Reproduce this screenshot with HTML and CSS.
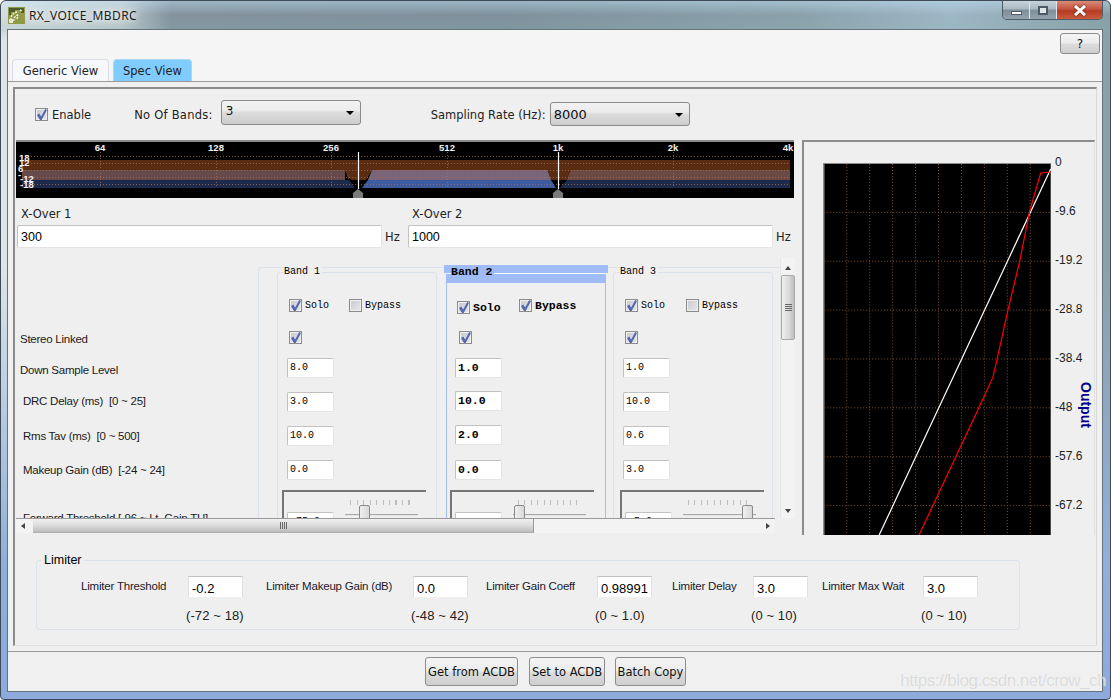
FILE: index.html
```html
<!DOCTYPE html>
<html lang="en">
<head>
    <meta charset="UTF-8">
    <title>RX_VOICE_MBDRC</title>
    <link rel="stylesheet" href="styles.css">
</head>
<body>
<div class="window">
    <div class="titlebar">
        <svg class="app-icon" width="17" height="17" viewBox="0 0 17 17">
            <rect width="17" height="17" fill="#8f9a45"/>
            <path d="M1 1h15v5h-3v-3h-6v2h-4v3h-2z" fill="#4c5a2c"/>
            <path d="M3 13a7 7 0 0 1 7-8M6 14a5 5 0 0 1 5-6M12 3l2 1M9 12a2 2 0 0 1 2-2" stroke="#f4f4e8" stroke-width="1.4" stroke-dasharray="2 1" fill="none"/>
            <rect x="1" y="12" width="4" height="4" fill="#e8e8d8"/>
        </svg>
        <span class="app-title">RX_VOICE_MBDRC</span>
        <div class="window-btns">
            <div class="win-btn win-min"><span></span></div>
            <div class="win-btn win-max"><span></span></div>
            <div class="win-btn win-close">
                <svg width="14" height="11" viewBox="0 0 14 11"><path d="M2 1l10 9M12 1l-10 9" stroke="#fff" stroke-width="3"/></svg>
            </div>
        </div>
    </div>

    <div class="client">
        <div class="client-head">
            <div class="help-row"><button class="btn help-btn">?</button></div>
            <div class="tabs">
                <div class="tab">Generic View</div>
                <div class="tab tab-active">Spec View</div>
            </div>
        </div>

        <div class="tab-pane">
            <div class="panel">
                <div class="options-row">
                    <input type="checkbox" class="check" checked>
                    <label class="opt-enable">Enable</label>
                    <label class="opt-bands">No Of Bands:</label>
                    <div class="combo combo-bands">3</div>
                    <label class="opt-rate">Sampling Rate (Hz):</label>
                    <div class="combo combo-rate">8000</div>
                </div>

                <div class="editor-row">
                    <div class="editor-left">
                        <svg class="spectrum" width="778" height="58" viewBox="16 140 778 58">
                            <rect x="16" y="140" width="778" height="58" fill="#000"/>
                            <rect x="16" y="140" width="778" height="2" fill="#8c8c8c"/>
                            <!-- level bands -->
                            <rect x="22" y="160" width="768" height="10" fill="#5a2c12"/>
                            <rect x="22" y="170" width="323" height="10" fill="#66494a"/>
                            <path d="M22 180h327l6 8h-333z" fill="#1d2a4c"/>
                            <path d="M345 170h4v10h0z" fill="#66494a"/>
                            <path d="M345 170h27l-6 10h-15z" fill="#5a2c12"/>
                            <path d="M545 170h27l-5 10h-16z" fill="#5a2c12"/>
                            <path d="M372 170h175l4 10h-183z" fill="#7a6479"/>
                            <path d="M368 180h183l5 8h-194z" fill="#3d5c9f"/>
                            <path d="M571 170h219v10h-223z" fill="#6b4a44"/>
                            <path d="M567 180h223v8h-230z" fill="#1d2a4c"/>
                            <!-- grid -->
                            <g class="spec-grid">
                                <path d="M22 156.500h768M22 163.500h768M22 170.500h768M22 177.500h768M22 184.500h768"/>
                                <path d="M100.500 152v36M216.500 152v36M331.500 152v36M447.500 152v36M673.500 152v36"/>
                            </g>
                            <g class="spec-text">
                                <text x="100" y="151" text-anchor="middle">64</text>
                                <text x="216" y="151" text-anchor="middle">128</text>
                                <text x="331" y="151" text-anchor="middle">256</text>
                                <text x="447" y="151" text-anchor="middle">512</text>
                                <text x="558" y="151" text-anchor="middle">1k</text>
                                <text x="673" y="151" text-anchor="middle">2k</text>
                                <text x="788" y="151" text-anchor="middle">4k</text>
                                <text x="19" y="161">18</text>
                                <text x="19" y="166">12</text>
                                <text x="18" y="172">6</text>
                                <text x="18" y="178">-</text>
                                <text x="20" y="182">-12</text>
                                <text x="20" y="188">-18</text>
                            </g>
                            <path d="M358.500 152v37M558.500 152v37" stroke="#fff" stroke-width="1.200"/>
                            <path d="M358 189l5 4v5h-10v-5zM558 189l5 4v5h-10v-5z" fill="#7a7a7a"/>
                        </svg>

                        <div class="xover-row">
                            <div class="xover">
                                <div class="xover-label">X-Over 1</div>
                                <div class="xover-field"><input class="field xover-input" value="300"><span>Hz</span></div>
                            </div>
                            <div class="xover">
                                <div class="xover-label">X-Over 2</div>
                                <div class="xover-field"><input class="field xover-input" value="1000"><span>Hz</span></div>
                            </div>
                        </div>

                        <div class="scroll-view">
                            <div class="scroll-content">
                                <div class="row-labels">
                                    <div>Stereo Linked</div>
                                    <div>Down Sample Level</div>
                                    <div class="indent">DRC Delay (ms)&nbsp; [0 ~ 25]</div>
                                    <div class="indent">Rms Tav (ms)&nbsp; [0 ~ 500]</div>
                                    <div class="indent">Makeup Gain (dB)&nbsp; [-24 ~ 24]</div>
                                    <div class="indent">Forward Threshold [-96 ~ Lt. Gain TH]</div>
                                </div>
                                <div class="band-list">
                                    <div class="band band-1">
                                        <div class="band-title">Band 1</div>
                                        <div class="band-checks">
                                            <input type="checkbox" class="check" checked><span class="check-text solo-text">Solo</span>
                                            <input type="checkbox" class="check"><span class="check-text">Bypass</span>
                                        </div>
                                        <div class="band-stereo"><input type="checkbox" class="check" checked></div>
                                        <input class="field band-input" value="8.0">
                                        <input class="field band-input" value="3.0">
                                        <input class="field band-input" value="10.0">
                                        <input class="field band-input" value="0.0">
                                        <div class="threshold">
                                            <input class="field band-input" value="-75.0">
                                            <div class="slider"><div class="slider-thumb" style="left: 14px"></div></div>
                                        </div>
                                    </div>
                                    <div class="band band-2">
                                        <div class="band-title">Band 2</div>
                                        <div class="band-checks">
                                            <input type="checkbox" class="check" checked><span class="check-text solo-text">Solo</span>
                                            <input type="checkbox" class="check" checked><span class="check-text">Bypass</span>
                                        </div>
                                        <div class="band-stereo"><input type="checkbox" class="check" checked></div>
                                        <input class="field band-input" value="1.0">
                                        <input class="field band-input" value="10.0">
                                        <input class="field band-input" value="2.0">
                                        <input class="field band-input" value="0.0">
                                        <div class="threshold">
                                            <input class="field band-input" value="-81.0">
                                            <div class="slider"><div class="slider-thumb" style="left: 1px"></div></div>
                                        </div>
                                    </div>
                                    <div class="band band-3">
                                        <div class="band-title">Band 3</div>
                                        <div class="band-checks">
                                            <input type="checkbox" class="check" checked><span class="check-text solo-text">Solo</span>
                                            <input type="checkbox" class="check"><span class="check-text">Bypass</span>
                                        </div>
                                        <div class="band-stereo"><input type="checkbox" class="check" checked></div>
                                        <input class="field band-input" value="1.0">
                                        <input class="field band-input" value="10.0">
                                        <input class="field band-input" value="0.6">
                                        <input class="field band-input" value="3.0">
                                        <div class="threshold">
                                            <input class="field band-input" value="-5.0">
                                            <div class="slider"><div class="slider-thumb" style="left: 59px"></div></div>
                                        </div>
                                    </div>
                                </div>
                            </div>
                            <div class="vscroll">
                                <div class="arrow arrow-up"></div>
                                <div class="vthumb"><span class="vgrip"></span></div>
                                <div class="arrow arrow-down"></div>
                            </div>
                            <div class="hscroll">
                                <div class="arrow arrow-left"></div>
                                <div class="hthumb"><span class="hgrip"></span></div>
                                <div class="arrow arrow-right"></div>
                            </div>
                        </div>
                    </div>

                    <div class="chart-panel">
                        <svg class="chart" width="227" height="372" viewBox="824 163 227 372">
                            <rect x="824" y="163" width="227" height="372" fill="#000"/>
                            <g class="chart-grid">
                                <path d="M846.500 163v372M869.500 163v372M892.500 163v372M915.500 163v372M938.500 163v372M961.500 163v372M984.500 163v372M1007.500 163v372M1030.500 163v372"/>
                                <path d="M824 211.500h227M824 260.500h227M824 309.500h227M824 358.500h227M824 407.500h227M824 456.500h227M824 505.500h227"/>
                            </g>
                            <path d="M1051 168L879 535" stroke="#fff" stroke-width="1.200" fill="none"/>
                            <path d="M1051 171L1041 172L1030 210L1020 260L1008 310L997 360L993 377L983 399L919 535" stroke="#f00" stroke-width="1.200" fill="none"/>
                        </svg>
                        <div class="axis">
                            <div>0</div>
                            <div>-9.6</div>
                            <div>-19.2</div>
                            <div>-28.8</div>
                            <div>-38.4</div>
                            <div>-48</div>
                            <div>-57.6</div>
                            <div>-67.2</div>
                        </div>
                        <div class="axis-title">Output</div>
                    </div>
                </div>

                <fieldset class="limiter">
                    <legend>Limiter</legend>
                    <div class="limiter-grid">
                        <span class="lim-label">Limiter Threshold</span>
                        <input class="lim-input" value="-0.2">
                        <span class="lim-label">Limiter Makeup Gain (dB)</span>
                        <input class="lim-input" value="0.0">
                        <span class="lim-label">Limiter Gain Coeff</span>
                        <input class="lim-input" value="0.98991">
                        <span class="lim-label">Limiter Delay</span>
                        <input class="lim-input" value="3.0">
                        <span class="lim-label">Limiter Max Wait</span>
                        <input class="lim-input" value="3.0">

                        <span></span><span class="lim-range">(-72 ~ 18)</span>
                        <span></span><span class="lim-range">(-48 ~ 42)</span>
                        <span></span><span class="lim-range">(0 ~ 1.0)</span>
                        <span></span><span class="lim-range">(0 ~ 10)</span>
                        <span></span><span class="lim-range">(0 ~ 10)</span>
                    </div>
                </fieldset>
            </div>
        </div>

        <div class="footer">
            <button class="btn foot-btn btn-get">Get from ACDB</button>
            <button class="btn foot-btn btn-set">Set to ACDB</button>
            <button class="btn foot-btn btn-batch">Batch Copy</button>
        </div>
    </div>
    <div class="watermark">https://blog.csdn.net/crow_ch</div>
</div>
</body>
</html>
```

FILE: styles.css
```css
* {
    box-sizing: border-box;
}
body {
    margin: 0;
    width: 1111px;
    height: 700px;
    overflow: hidden;
    background-color: #fff;
    font-family: "Liberation Sans", Arial, sans-serif;
    font-size: 12px;
    color: #000;
}
.window {
    position: relative;
    width: 1111px;
    height: 700px;
    padding: 0 7px 8px 6px;
    border: 1px solid #3e4a55;
    border-radius: 6px 6px 4px 4px;
    background:
        linear-gradient(180deg, rgba(190, 225, 245, 0.45) 0, rgba(120, 135, 150, 0.1) 14px, rgba(130, 170, 170, 0.25) 28px, rgba(0, 0, 0, 0) 40px),
        linear-gradient(180deg, rgba(0, 0, 0, 0) 260px, #8fb0dc 560px, #8cabdc 100%),
        linear-gradient(90deg, #dfe6e8 0, #c4d0d2 120px, #84949f 170px, #7f919d 500px, #8da4ae 800px, #a2bccb 950px, #8aa0a8 1111px);
}
.titlebar {
    height: 28px;
    display: flex;
    align-items: center;
}
.app-icon {
    flex: none;
    margin-left: 1px;
}
.app-title {
    margin-left: 4px;
    font-family: "Noto Sans", sans-serif;
    font-size: 12px;
    letter-spacing: 0.400px;
    color: #1c1c1c;
    text-shadow: 0 0 6px #fff, 0 0 10px #fff;
}
.window-btns {
    margin-left: auto;
    align-self: flex-start;
    display: flex;
    height: 19px;
    border: 1px solid #4f5b66;
    border-top: none;
    border-radius: 0 0 5px 5px;
    overflow: hidden;
}
.win-btn {
    display: flex;
    align-items: center;
    justify-content: center;
    width: 27px;
    background: linear-gradient(180deg, #c7d3da 0, #a9b7c1 45%, #7e8e99 50%, #93a4ae 100%);
    border-right: 1px solid #dde5ea;
}
.win-close {
    width: 45px;
    border-right: none;
    background: linear-gradient(180deg, #d98a78 0, #c4553f 45%, #b53a22 55%, #cb5b3f 100%);
}
.win-min span {
    width: 11px;
    height: 4px;
    margin-top: 5px;
    background: #fff;
    border: 1px solid #4e5a68;
}
.win-max span {
    width: 10px;
    height: 9px;
    background: #dfe6ea;
    border: 2px solid #4e5a68;
}
.win-close svg {
    filter: drop-shadow(0 0 1px #5a2015);
}

.client {
    height: 663px;
    border: 1px solid #66727c;
    background-color: #f0f0f0;
    display: flex;
    flex-direction: column;
}
.client-head {
    height: 52px;
    background-color: #f5f5f5;
    border-bottom: 1px solid #9a9a9a;
    display: flex;
    flex-direction: column;
}
.help-row {
    display: flex;
    justify-content: flex-end;
    padding: 3px 2px 0 0;
    height: 30px;
}
.btn {
    border: 1px solid #8c8c8c;
    border-radius: 3px;
    background: linear-gradient(180deg, #f4f4f4 0, #ececec 48%, #dcdcdc 52%, #cfcfcf 100%);
    font-family: "DejaVu Sans", sans-serif;
    font-size: 12px;
    color: #111;
    padding: 0;
}
.help-btn {
    width: 40px;
    height: 21px;
}
.tabs {
    display: flex;
    padding-left: 4px;
    gap: 4px;
    height: 22px;
}
.tab {
    width: 97px;
    height: 22px;
    padding-top: 4px;
    text-align: center;
    font-family: "DejaVu Sans", sans-serif;
    font-size: 11.500px;
    color: #222;
    background-color: #f7f8fb;
    border: 1px solid #d8dde3;
    border-bottom: none;
    border-radius: 4px 4px 0 0;
}
.tab-active {
    width: 79px;
    background-color: #81ccff;
    border-color: #a8d8f5;
}

.tab-pane {
    height: 569px;
    padding: 5px;
}
.panel {
    height: 559px;
    border-top: 2px solid #8c8c8c;
    border-left: 2px solid #8c8c8c;
    border-right: 1px solid #d8d8d8;
    border-bottom: 1px solid #e2e2e2;
    padding-left: 1px;
    background-color: #efefef;
}
.options-row {
    height: 51px;
    display: flex;
    align-items: center;
    padding: 0 0 0 19px;
    font-family: "DejaVu Sans", sans-serif;
    font-size: 11.500px;
    color: #222;
}
.opt-enable {
    margin-left: 4px;
}
.opt-bands {
    margin-left: 43px;
    margin-right: 8px;
    letter-spacing: 0.250px;
}
.opt-rate {
    margin-left: 70px;
    margin-right: 4px;
}
.combo {
    position: relative;
    width: 140px;
    height: 25px;
    padding: 3px 0 0 4px;
    border: 1px solid #8a8a8a;
    border-radius: 3px;
    background: linear-gradient(180deg, #f2f2f2 0, #ececec 40%, #dcdcdc 50%, #cdcdcd 100%);
    font-size: 12px;
    color: #111;
}
.combo-bands {
    margin-bottom: 5px;
}
.combo-rate {
    height: 24px;
    margin-bottom: 1px;
    padding: 4px 0 0 3px;
    font-size: 13px;
}
.combo::after {
    content: "";
    position: absolute;
    right: 6px;
    top: 10px;
    border-left: 4px solid transparent;
    border-right: 4px solid transparent;
    border-top: 4px solid #000;
}

.check {
    appearance: none;
    position: relative;
    flex: none;
    width: 13px;
    height: 13px;
    margin: 0;
    border: 1px solid #8b8b8b;
    background: linear-gradient(135deg, #c9cad0 0, #e6e6ea 100%);
    box-shadow: inset 0 0 0 1px #f0f0f0;
}
.check:checked::after {
    content: "";
    position: absolute;
    left: 1px;
    top: 0;
    width: 10px;
    height: 11px;
    background: #5468ac;
    clip-path: polygon(0 55%, 22% 42%, 42% 68%, 82% 0, 100% 8%, 46% 100%, 30% 100%);
}

.editor-row {
    display: flex;
    height: 395px;
}
.editor-left {
    flex: none;
    width: 779px;
}
.spectrum {
    display: block;
}
.spec-grid path {
    stroke: #b4735a;
    stroke-width: 1;
    stroke-dasharray: 1 2;
    fill: none;
    opacity: 0.7;
}
.spec-text text {
    font-family: "Liberation Sans", Arial, sans-serif;
    font-size: 9.500px;
    font-weight: bold;
    fill: #f2f2f2;
}
.xover-row {
    display: flex;
    padding-left: 1px;
    height: 50px;
    margin-bottom: 10px;
    font-family: "DejaVu Sans", sans-serif;
    font-size: 11.500px;
    color: #222;
}
.xover {
    flex: none;
    width: 391px;
}
.xover-label {
    height: 27px;
    padding: 9px 0 0 4px;
}
.xover-field {
    display: flex;
    align-items: center;
}
.xover-field span {
    margin-left: 3px;
}
.field {
    border: 1px solid #c2c2c2;
    border-bottom-color: #e4e4e4;
    border-right-color: #e4e4e4;
    border-radius: 2px;
    background-color: #fff;
    margin: 0;
    outline: none;
    color: #000;
}
.xover-input {
    width: 365px;
    height: 23px;
    padding: 1px 0 0 3px;
    font-family: "Liberation Sans", Arial, sans-serif;
    font-size: 12.500px;
}

.scroll-view {
    display: grid;
    grid-template-columns: 764px 15px;
    grid-template-rows: 260px 15px;
}
.scroll-content {
    overflow: hidden;
    display: flex;
}
.row-labels {
    flex: none;
    width: 242px;
    padding: 74px 0 0 4px;
    display: grid;
    grid-template-rows: 31px 31px 35px 34px 48px 14px;
    line-height: 14px;
    font-size: 11.500px;
    letter-spacing: -0.250px;
    color: #1a1a1a;
    white-space: nowrap;
}
.indent {
    padding-left: 3px;
}
.band-list {
    flex: none;
    width: 522px;
    height: 260px;
    margin-top: 9px;
    padding: 4px 0 0 18px;
    display: flex;
    align-items: flex-start;
    border-top: 1px solid #dde3ea;
    border-left: 1px solid #dde3ea;
    border-radius: 3px 0 0 0;
    font-family: "Liberation Mono", monospace;
    font-size: 10px;
}
.band {
    position: relative;
    display: flex;
    flex-direction: column;
    flex: none;
    width: 160px;
    height: 300px;
    padding: 26px 0 0 9px;
    border: 1px solid #dde3ea;
    border-radius: 3px;
}
.band-title {
    position: absolute;
    z-index: 1;
    top: -7px;
    left: 6px;
    padding: 0 2px 0 0;
    background-color: #efefef;
    line-height: 12px;
}
.band-checks {
    display: flex;
    align-items: center;
    height: 13px;
    padding-left: 2px;
}
.check-text {
    margin-left: 3px;
    margin-top: -1px;
}
.solo-text {
    width: 44px;
}
.band-stereo {
    display: flex;
    height: 13px;
    margin-top: 19px;
    padding-left: 2px;
}
.band-input {
    flex: none;
    width: 47px;
    height: 20px;
    margin-top: 14px;
    padding: 0 0 2px 2px;
    font-family: "Liberation Mono", monospace;
    font-size: 10px;
}
.threshold {
    flex: none;
    display: flex;
    width: 144px;
    height: 60px;
    margin: 10px 0 0 -5px;
    padding: 7px 0 0 5px;
    border-top: 2px solid #767676;
    border-left: 2px solid #767676;
}
.threshold .band-input {
    margin-top: 13px;
    margin-left: -2px;
}
.slider {
    position: relative;
    width: 73px;
    height: 26px;
    margin: 1px 0 0 11px;
    background:
        repeating-linear-gradient(90deg, #bdbdbd 0, #bdbdbd 1px, transparent 1px, transparent 6.500px) 5px 0 / 64px 5px no-repeat,
        linear-gradient(#a8a8a8, #a8a8a8) 0 14px / 100% 1px no-repeat,
        linear-gradient(#e6e6e6, #e6e6e6) 0 15px / 100% 1px no-repeat;
}
.slider-thumb {
    position: absolute;
    top: 5px;
    width: 11px;
    height: 17px;
    border: 1px solid #8a8a8a;
    border-radius: 2px 2px 0 0;
    background: linear-gradient(90deg, #f0f0f0, #d8d8d8);
}
.band-2 {
    margin-left: 9px;
    margin-top: 1px;
    padding-top: 25px;
    padding-left: 8px;
    border-color: #a3bef5;
    border-width: 1px 1px 0 1px;
    border-top-color: #fff;
    font-weight: bold;
}
.band-2::before {
    content: "";
    position: absolute;
    top: -9px;
    left: -3px;
    width: 164px;
    height: 8px;
    background-color: #9fbcf6;
}
.band-2::after {
    content: "";
    position: absolute;
    top: 0;
    left: -1px;
    width: 160px;
    height: 9px;
    background-color: #9fbcf6;
}
.band-2 .band-title {
    top: -9px;
    left: 4px;
    background-color: #9fbcf6;
    font-size: 11.500px;
    line-height: 13px;
}
.band-2 .band-checks .check:first-child {
    margin-top: 4px;
}
.band-2 .check-text {
    font-size: 11.500px;
}
.band-2 .solo-text {
    width: 46px;
    margin-top: 4px;
}
.band-2 .band-stereo {
    padding-left: 4px;
}
.band-2 .band-input {
    font-size: 11.500px;
    font-weight: bold;
    margin-top: 13px;
}
.band-2 .band-stereo + .band-input {
    margin-top: 14px;
}
.band-2 .band-input + .band-input + .band-input {
    margin-top: 14px;
}
.band-2 .band-input + .band-input + .band-input + .band-input {
    margin-top: 15px;
}
.band-2 .threshold .band-input {
    margin-top: 13px;
}
.band-3 {
    margin-left: 7px;
}
.band-3 .threshold {
    margin-left: -3px;
}
.band-3 .solo-text {
    width: 45px;
}

.vscroll {
    display: flex;
    flex-direction: column;
    align-items: center;
    padding-top: 2px;
    background-color: #f3f3f3;
    border-left: 1px solid #e6e6e6;
}
.arrow {
    flex: none;
    width: 14px;
    height: 15px;
    display: flex;
    align-items: center;
    justify-content: center;
}
.arrow::after {
    content: "";
    border: 3px solid transparent;
}
.arrow-up::after {
    border-bottom: 4px solid #444;
    border-top: none;
}
.arrow-down {
    margin-top: auto;
}
.arrow-down::after {
    border-top: 4px solid #444;
    border-bottom: none;
}
.arrow-left::after {
    border-right: 4px solid #444;
    border-left: none;
}
.arrow-right {
    margin-left: auto;
}
.arrow-right::after {
    border-left: 4px solid #444;
    border-right: none;
}
.vthumb {
    flex: none;
    width: 14px;
    height: 65px;
    display: flex;
    align-items: center;
    justify-content: center;
    border: 1px solid #a8a8a8;
    border-radius: 2px;
    background: linear-gradient(90deg, #f0f0f0, #d8d8d8 60%, #bdbdbd);
}
.vgrip {
    width: 7px;
    height: 7px;
    background: repeating-linear-gradient(180deg, #666 0, #666 1px, transparent 1px, transparent 2px);
}
.hscroll {
    grid-column: 1 / 2;
    width: 759px;
    display: flex;
    align-items: center;
    background-color: #f3f3f3;
    border-top: 1px solid #9a9a9a;
}
.hthumb {
    flex: none;
    width: 501px;
    height: 14px;
    display: flex;
    align-items: center;
    justify-content: center;
    margin-left: 3px;
    border-right: 1px solid #999;
    border-bottom: 1px solid #b0b0b0;
    background: linear-gradient(180deg, #f0f0f0, #dcdcdc 50%, #bcbcbc);
}
.hgrip {
    width: 7px;
    height: 7px;
    background: repeating-linear-gradient(90deg, #666 0, #666 1px, transparent 1px, transparent 2px);
}

.chart-panel {
    flex: none;
    width: 293px;
    height: 395px;
    margin-left: 7px;
    display: flex;
    align-items: flex-start;
    padding: 21px 0 0 20px;
    border-top: 2px solid #8c8c8c;
    border-left: 2px solid #8c8c8c;
    border-right: 1px solid #e2e2e2;
}
.chart {
    flex: none;
    display: block;
    border-top: 1px solid #8c8c8c;
    box-shadow: -1px 0 0 #8c8c8c;
}
.chart-grid path {
    stroke: #7d5232;
    stroke-width: 1;
    stroke-dasharray: 1 2;
    fill: none;
}
.axis {
    margin-top: -9px;
    margin-left: 4px;
    width: 34px;
    font-size: 12px;
    color: #222;
    white-space: nowrap;
}
.axis div {
    height: 49px;
    line-height: 16px;
}
.axis-title {
    writing-mode: vertical-rl;
    margin-top: 219px;
    margin-left: -7px;
    font-weight: bold;
    font-size: 14px;
    color: #00008b;
}

.limiter {
    width: 984px;
    height: 77px;
    margin: 18px 0 0 20px;
    padding: 0;
    border: 1px solid #dce3ec;
    border-radius: 3px;
}
.limiter legend {
    margin-left: 5px;
    padding: 0 2px;
    font-size: 12.500px;
    line-height: 14px;
}
.limiter-grid {
    display: grid;
    grid-template-columns: 107px 78px 147px 73px 111px 75px 81px 69px 101px 76px;
    grid-template-rows: 21px 18px;
    row-gap: 11px;
    padding: 9px 0 0 44px;
}
.lim-label {
    font-size: 11.500px;
    letter-spacing: -0.200px;
    color: #1a1a2a;
    padding-top: 4px;
    white-space: nowrap;
}
.lim-input {
    width: 55px;
    height: 21px;
    padding: 2px 0 0 3px;
    border: none;
    border-top: 1px solid #c2c2c2;
    border-left: 1px solid #e0e0e0;
    border-right: 1px solid #e0e0e0;
    background-color: #fff;
    outline: none;
    font-family: "Liberation Sans", Arial, sans-serif;
    font-size: 13px;
}
.lim-range {
    margin-left: -2px;
    font-size: 13px;
    letter-spacing: 0.100px;
    color: #222;
    white-space: nowrap;
}

.footer {
    height: 40px;
    flex: none;
    display: flex;
    justify-content: center;
    gap: 10px;
    padding: 5px 0 0 1px;
    border-top: 1px solid #9a9a9a;
    background-color: #f0f0f0;
}
.foot-btn {
    height: 29px;
    font-size: 11.500px;
}
.btn-get {
    width: 93px;
}
.btn-set {
    width: 76px;
    margin-left: 1px;
}
.btn-batch {
    width: 71px;
}
.watermark {
    position: absolute;
    right: 4px;
    bottom: 8px;
    font-size: 17px;
    letter-spacing: -0.500px;
    color: rgba(190, 190, 190, 0.55);
    text-shadow: 0 0 1px #fff;
}
```
